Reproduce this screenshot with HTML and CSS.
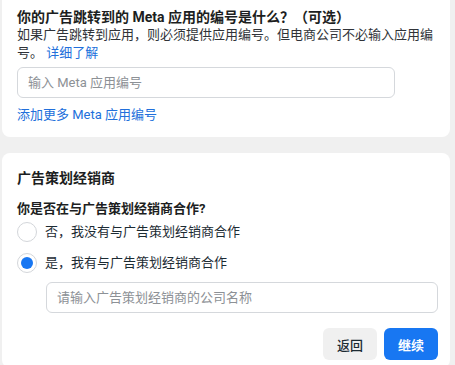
FILE: index.html
```html
<!DOCTYPE html>
<html lang="zh-CN">
<head>
<meta charset="utf-8">
<link rel="stylesheet" href="styles.css">
</head>
<body>
<div class="page">
  <section class="card card-first">
    <div class="title">你的广告跳转到的 Meta 应用的编号是什么？（可选）</div>
    <div class="desc">如果广告跳转到应用，则必须提供应用编号。但电商公司不必输入应用编号。 <a class="link" href="#">详细了解</a></div>
    <input class="field" type="text" placeholder="输入 Meta 应用编号">
    <a class="link add-link" href="#">添加更多 Meta 应用编号</a>
  </section>
  <section class="card card-second">
    <div class="heading">广告策划经销商</div>
    <div class="question">你是否在与广告策划经销商合作?</div>
    <div class="options">
      <label class="option"><span class="radio"></span><span class="option-text">否，我没有与广告策划经销商合作</span></label>
      <label class="option"><span class="radio checked"></span><span class="option-text">是，我有与广告策划经销商合作</span></label>
    </div>
    <div class="indent">
      <input class="field" type="text" placeholder="请输入广告策划经销商的公司名称">
    </div>
    <div class="actions">
      <button class="btn btn-secondary">返回</button>
      <button class="btn btn-primary">继续</button>
    </div>
  </section>
</div>
</body>
</html>
```

FILE: styles.css
```css
* { box-sizing: border-box; }
html, body {
  margin: 0;
  padding: 0;
  background: #f0f0f0;
  font-family: Roboto, "Noto Sans CJK SC", sans-serif;
  font-size: 13px;
  line-height: 18px;
  color: #1c2b33;
  overflow: hidden;
}
.page {
  width: 455px;
  padding: 0 5px 0 2px;
  display: flex;
  flex-direction: column;
  gap: 16px;
}
.card {
  background: #fff;
  border-radius: 8px;
  padding: 0 8px 0 15px;
  display: flex;
  flex-direction: column;
  align-items: flex-start;
}
.card-first {
  margin-top: -8px;
  padding-top: 16px;
  padding-bottom: 13px;
}
.card-second {
  padding-top: 16px;
  padding-bottom: 8px;
}
.title {
  font-size: 14px;
  font-weight: 700;
  color: #1c1e21;
}
.desc {
  color: #303338;
  align-self: stretch;
}
.link {
  color: #216fdb;
  text-decoration: none;
}
.field {
  display: block;
  width: 378px;
  height: 31px;
  margin-top: 5px;
  border: 1px solid #d5d8dc;
  border-radius: 6px;
  padding: 0 10px;
  font-family: Roboto, "Noto Sans CJK SC", sans-serif;
  font-size: 13px;
  color: #1c2b33;
  background: #fff;
  outline: none;
}
.field::placeholder { color: #8d9196; }
.add-link {
  margin-top: 8px;
}
.heading {
  font-size: 14px;
  font-weight: 700;
  color: #1c1e21;
}
.question {
  margin-top: 13px;
  font-weight: 700;
  color: #1c1e21;
}
.options {
  margin-top: 4px;
  display: flex;
  flex-direction: column;
  gap: 11px;
}
.option {
  display: flex;
  align-items: center;
  gap: 8px;
  height: 20px;
  color: #1c2b33;
}
.radio {
  width: 20px;
  height: 20px;
  border-radius: 50%;
  border: 1px solid #d3d6da;
  display: flex;
  align-items: center;
  justify-content: center;
  flex: none;
}
.radio.checked::after {
  content: "";
  width: 12px;
  height: 12px;
  border-radius: 50%;
  background: #1877f2;
}
.indent {
  margin-top: 9px;
  padding-left: 29px;
}
.indent .field {
  margin-top: 0;
  width: 392px;
}
.actions {
  align-self: stretch;
  display: flex;
  justify-content: flex-end;
  gap: 7px;
  margin-top: 15px;
  padding-right: 4px;
}
.btn {
  height: 32px;
  width: 54px;
  border: none;
  border-radius: 6px;
  font-family: Roboto, "Noto Sans CJK SC", sans-serif;
  font-size: 13px;
  font-weight: 500;
  padding: 0;
}
.btn-secondary {
  background: #f0f0f0;
  color: #1c2b33;
}
.btn-primary {
  background: #1877f2;
  color: #fff;
  font-weight: 700;
}
```
